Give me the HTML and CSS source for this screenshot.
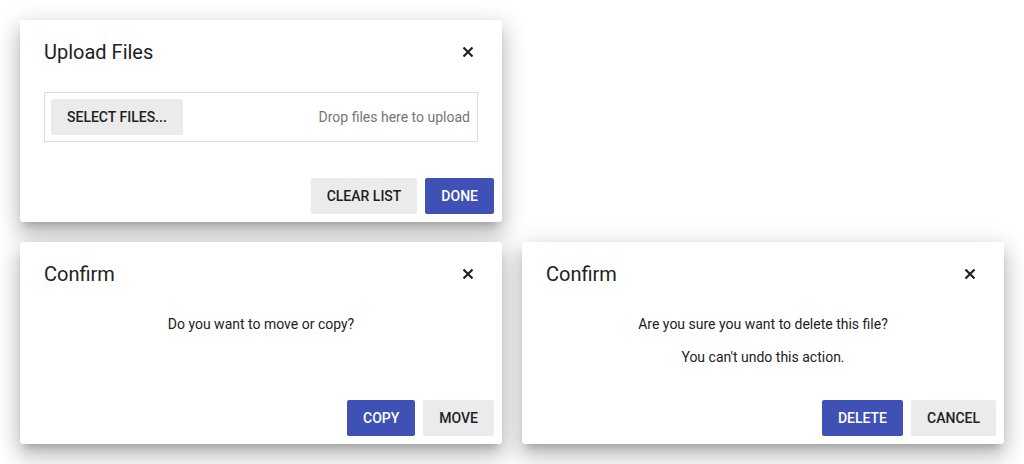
FILE: index.html
```html
<!DOCTYPE html>
<html>
<head>
<meta charset="utf-8">
<link rel="stylesheet" href="styles.css">
</head>
<body>
<div class="grid">
  <div class="dialog">
    <div class="header">
      <span class="title">Upload Files</span>
      <span class="close"><svg width="12" height="12" viewBox="0 0 12 12"><path d="M1.5 1.5L10.5 10.5M10.5 1.5L1.5 10.5" stroke="#212121" stroke-width="2.2" fill="none"/></svg></span>
    </div>
    <div class="body">
      <div class="upload">
        <button class="btn">Select files...</button>
        <span class="drop">Drop files here to upload</span>
      </div>
    </div>
    <div class="footer">
      <button class="btn">Clear list</button>
      <button class="btn primary">Done</button>
    </div>
  </div>
  <div class="spacer"></div>
  <div class="dialog">
    <div class="header">
      <span class="title">Confirm</span>
      <span class="close"><svg width="12" height="12" viewBox="0 0 12 12"><path d="M1.5 1.5L10.5 10.5M10.5 1.5L1.5 10.5" stroke="#212121" stroke-width="2.2" fill="none"/></svg></span>
    </div>
    <div class="body center">
      <p>Do you want to move or copy?</p>
    </div>
    <div class="footer">
      <button class="btn primary">Copy</button>
      <button class="btn">Move</button>
    </div>
  </div>
  <div class="dialog">
    <div class="header">
      <span class="title">Confirm</span>
      <span class="close"><svg width="12" height="12" viewBox="0 0 12 12"><path d="M1.5 1.5L10.5 10.5M10.5 1.5L1.5 10.5" stroke="#212121" stroke-width="2.2" fill="none"/></svg></span>
    </div>
    <div class="body center">
      <p>Are you sure you want to delete this file?</p>
      <p>You can't undo this action.</p>
    </div>
    <div class="footer">
      <button class="btn primary">Delete</button>
      <button class="btn">Cancel</button>
    </div>
  </div>
</div>
</body>
</html>
```

FILE: styles.css
```css
html, body {
  margin: 0;
  padding: 0;
  background: #ffffff;
}
body {
  font-family: Roboto, "Liberation Sans", sans-serif;
  color: #212121;
}
.grid {
  display: grid;
  grid-template-columns: 482px 482px;
  grid-auto-rows: 202px;
  gap: 20px;
  padding: 20px;
}
.dialog {
  background: #fff;
  border-radius: 3px;
  display: flex;
  flex-direction: column;
  box-shadow: 0 7px 8px -4px rgba(0,0,0,0.2), 0 13px 19px 2px rgba(0,0,0,0.14), 0 5px 24px 4px rgba(0,0,0,0.12);
}
.header {
  display: flex;
  align-items: center;
  justify-content: space-between;
  padding: 16px 28px 16px 24px;
  height: 32px;
}
.title {
  font-size: 20px;
  line-height: 32px;
  font-weight: 400;
}
.close {
  display: flex;
  width: 12px;
  height: 12px;
}
.body {
  flex: 1;
  padding: 8px 24px 0;
}
.body.center {
  text-align: center;
  font-size: 14px;
  line-height: 20px;
}
.body p {
  margin: 0 0 13px;
}
.upload {
  display: flex;
  align-items: center;
  justify-content: space-between;
  border: 1px solid #dcdcdc;
  padding: 6px 7px 6px 6px;
}
.drop {
  font-size: 14px;
  color: #757575;
}
.btn {
  font-family: Roboto, "Liberation Sans", sans-serif;
  font-size: 14px;
  font-weight: 500;
  text-transform: uppercase;
  height: 36px;
  padding: 0 16px;
  border: none;
  border-radius: 2px;
  background: #ebebeb;
  color: #212121;
  line-height: 36px;
}
.btn.primary {
  background: #3f51b5;
  color: #fff;
}
.footer {
  display: flex;
  justify-content: flex-end;
  gap: 8px;
  padding: 0 8px 8px;
}
```
